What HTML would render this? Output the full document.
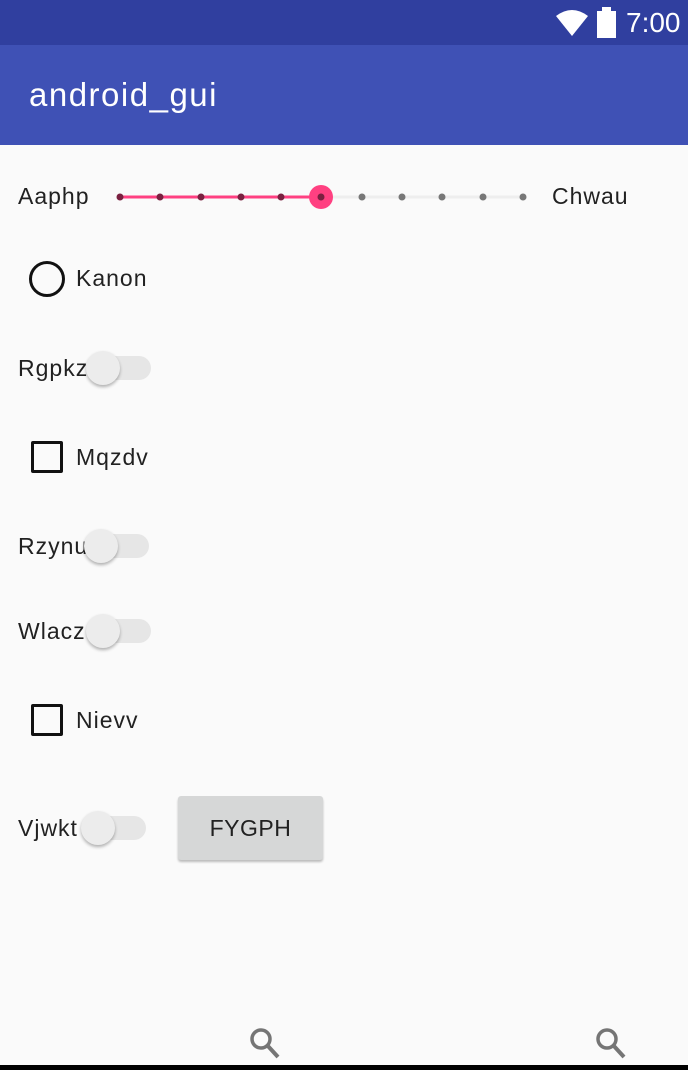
<!DOCTYPE html>
<html><head><style>
body{margin:0;width:688px;height:1070px;background:#FAFAFA;position:relative;overflow:hidden;font-family:"Liberation Sans",sans-serif;}
.a{position:absolute;}
.t{position:absolute;font-size:23px;letter-spacing:1px;color:#212121;line-height:1;}
.track{position:absolute;height:24px;border-radius:12px;background:#E6E6E6;}
.thumb{position:absolute;width:34px;height:34px;border-radius:50%;background:#ECECEC;box-shadow:0 2px 3px rgba(0,0,0,.3);}
.cb{position:absolute;width:26px;height:26px;border:3px solid #111;border-radius:2px;}
</style></head><body>
<div class="a" style="left:0;top:0;width:688px;height:45px;background:#303F9F"></div>
<svg class="a" style="left:554px;top:8px" width="40" height="30"><path d="M2 8 Q18 -4 34 8 L18 28 Z" fill="#fff"/></svg>
<div class="a" style="left:597px;top:11px;width:19px;height:27px;background:#fff"></div>
<div class="a" style="left:602px;top:7px;width:9px;height:5px;background:#fff"></div>
<div class="t" style="left:626px;top:9px;font-size:28px;letter-spacing:0;color:#fff">7:00</div>
<div class="a" style="left:0;top:45px;width:688px;height:100px;background:#3F51B5"></div>
<div class="t" style="left:29px;top:78px;font-size:33px;letter-spacing:1.5px;color:#fff">android_gui</div>

<div class="t" style="left:18px;top:185px">Aaphp</div>
<div class="t" style="left:552px;top:185px">Chwau</div>
<svg class="a" style="left:110px;top:180px" width="430" height="34">
<line x1="10" y1="17" x2="413" y2="17" stroke="#EEEEEE" stroke-width="3"/>
<line x1="10" y1="17" x2="211" y2="17" stroke="#FF4081" stroke-width="3"/>
<g fill="#777"><circle cx="252" cy="17" r="3.5"/><circle cx="292" cy="17" r="3.5"/><circle cx="332" cy="17" r="3.5"/><circle cx="373" cy="17" r="3.5"/><circle cx="413" cy="17" r="3.5"/></g>
<g fill="#7a2040"><circle cx="10" cy="17" r="3.5"/><circle cx="50" cy="17" r="3.5"/><circle cx="91" cy="17" r="3.5"/><circle cx="131" cy="17" r="3.5"/><circle cx="171" cy="17" r="3.5"/></g>
<circle cx="211" cy="17" r="12" fill="#FF4081"/><circle cx="211" cy="17" r="3.5" fill="#7a2040"/>
</svg>

<div class="a" style="left:29px;top:261px;width:30px;height:30px;border:3px solid #111;border-radius:50%"></div>
<div class="t" style="left:76px;top:267px">Kanon</div>

<div class="t" style="left:18px;top:357px">Rgpkz</div>
<div class="track" style="left:88px;top:356px;width:63px"></div>
<div class="thumb" style="left:86px;top:351px"></div>

<div class="cb" style="left:31px;top:441px"></div>
<div class="t" style="left:76px;top:446px">Mqzdv</div>

<div class="t" style="left:18px;top:535px">Rzynu</div>
<div class="track" style="left:86px;top:534px;width:63px"></div>
<div class="thumb" style="left:84px;top:529px"></div>

<div class="t" style="left:18px;top:620px">Wlacz</div>
<div class="track" style="left:88px;top:619px;width:63px"></div>
<div class="thumb" style="left:86px;top:614px"></div>

<div class="cb" style="left:31px;top:704px"></div>
<div class="t" style="left:76px;top:709px">Nievv</div>

<div class="t" style="left:18px;top:817px">Vjwkt</div>
<div class="track" style="left:83px;top:816px;width:63px"></div>
<div class="thumb" style="left:81px;top:811px"></div>

<div class="a" style="left:178px;top:796px;width:145px;height:64px;background:#D6D7D7;border-radius:3px;box-shadow:0 2px 2px rgba(0,0,0,.25)"></div>
<div class="t" style="left:178px;top:817px;width:145px;text-align:center;letter-spacing:0.5px">FYGPH</div>

<svg class="a" style="left:248px;top:1026px" width="36" height="36"><circle cx="13" cy="13" r="9" fill="none" stroke="#757575" stroke-width="3.5"/><line x1="19" y1="19" x2="30" y2="31" stroke="#757575" stroke-width="4"/></svg>
<svg class="a" style="left:594px;top:1026px" width="36" height="36"><circle cx="13" cy="13" r="9" fill="none" stroke="#757575" stroke-width="3.5"/><line x1="19" y1="19" x2="30" y2="31" stroke="#757575" stroke-width="4"/></svg>
<div class="a" style="left:0;top:1065px;width:688px;height:5px;background:#000"></div>
</body></html>
